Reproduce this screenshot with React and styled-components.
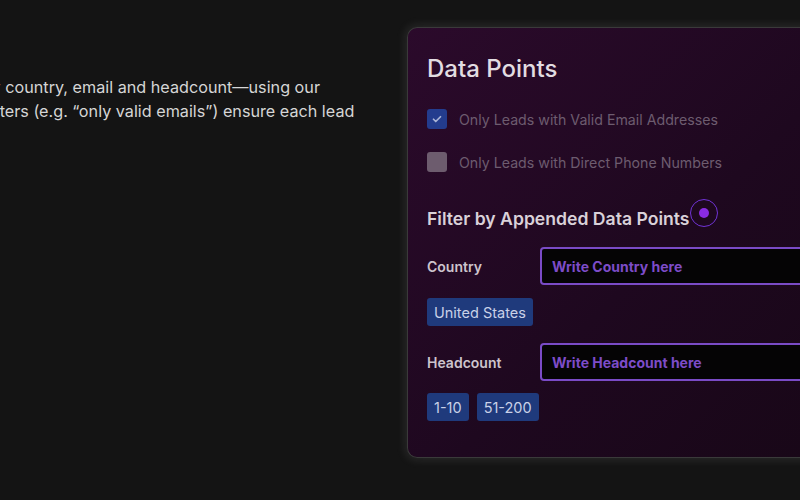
import React from 'react';
import styled, { createGlobalStyle } from 'styled-components';

const GlobalStyle = createGlobalStyle`
	html, body {
		margin: 0;
		padding: 0;
		background: #141414;
		overflow: hidden;
	}
	body {
		font-family: Inter, "Liberation Sans", sans-serif;
	}
`;

const Page = styled.div`
	width: 800px;
	height: 500px;
	display: grid;
	grid-template-columns: 407px 440px;
	align-items: start;
	overflow: hidden;
`;

const Intro = styled.div`
	padding-top: 75px;
	overflow: hidden;
`;

const IntroText = styled.p`
	margin: 0 0 0 -18px;
	font-size: 16.2px;
	line-height: 24px;
	color: #d6d6d6;
	white-space: nowrap;
`;

const Card = styled.section`
	margin-top: 27px;
	height: 431px;
	box-sizing: border-box;
	padding: 26px 20px 0 19px;
	border: 1px solid #3a3a3a;
	border-right: none;
	border-radius: 10px 0 0 10px;
	background: linear-gradient(135deg, #2b0a2b 0%, #1e081f 55%, #180717 100%);
	box-shadow: 0 0 10px 2px rgba(200, 200, 200, 0.12);
	display: flex;
	flex-direction: column;
`;

const Title = styled.h2`
	margin: 0;
	font-size: 24px;
	font-weight: 500;
	line-height: 30px;
	color: #e2dde2;
`;

const CheckList = styled.div`
	margin-top: 25px;
	display: flex;
	flex-direction: column;
	gap: 23px;
`;

const CheckRow = styled.label`
	display: flex;
	align-items: center;
	gap: 12px;
	font-size: 14.2px;
	color: #6d5c6f;
`;

const Box = styled.span`
	width: 20px;
	height: 20px;
	border-radius: 3px;
	display: flex;
	align-items: center;
	justify-content: center;
	background: ${p => (p.$checked ? '#233c8e' : '#6d5c6e')};
`;

const SectionHead = styled.div`
	margin-top: 35px;
	position: relative;
	align-self: flex-start;
	font-size: 17.6px;
	font-weight: 600;
	line-height: 24px;
	color: #d9d1d9;
`;

const Cursor = styled.span`
	position: absolute;
	left: 100%;
	top: -8px;
	width: 28px;
	height: 28px;
	box-sizing: border-box;
	border: 1.5px solid #7033d6;
	border-radius: 50%;
	display: flex;
	align-items: center;
	justify-content: center;
	&::after {
		content: '';
		width: 10px;
		height: 10px;
		border-radius: 50%;
		background: #8a2be2;
	}
`;

const Field = styled.div`
	display: grid;
	grid-template-columns: 113px 1fr;
	align-items: center;
	margin-top: ${p => p.$top}px;
`;

const FieldLabel = styled.span`
	font-size: 14px;
	font-weight: 600;
	color: #cdc4cd;
`;

const Input = styled.input`
	height: 38px;
	box-sizing: border-box;
	padding: 0 10px;
	border: 2px solid #7a4bc6;
	border-radius: 4px;
	background: #050405;
	font-family: Inter, "Liberation Sans", sans-serif;
	font-size: 14px;
	font-weight: 700;
	color: #7d4cc8;
	outline: none;
	&::placeholder {
		color: #7d4cc8;
		opacity: 1;
	}
`;

const Tags = styled.div`
	display: flex;
	gap: 8px;
	margin-top: ${p => p.$top}px;
`;

const Tag = styled.span`
	height: 28px;
	padding: 0 7px;
	display: flex;
	align-items: center;
	border-radius: 3px;
	background: #1f3a7c;
	font-size: 14.5px;
	color: #c9d1e8;
`;

function App () {
	return (
		<>
			<GlobalStyle />
			<Page>
				<Intro>
					<IntroText>
						by country, email and headcount—using our
						<br />
						Filters (e.g. “only valid emails”) ensure each lead
					</IntroText>
				</Intro>
				<Card>
					<Title>Data Points</Title>
					<CheckList>
						<CheckRow>
							<Box $checked>
								<svg width="12" height="12" viewBox="0 0 24 24" fill="none" stroke="#a9b3d6" strokeWidth="3.5" strokeLinecap="round" strokeLinejoin="round">
									<path d="M5 12.5l4.5 4.5L19 7.5" />
								</svg>
							</Box>
							Only Leads with Valid Email Addresses
						</CheckRow>
						<CheckRow>
							<Box />
							Only Leads with Direct Phone Numbers
						</CheckRow>
					</CheckList>
					<SectionHead>
						Filter by Appended Data Points
						<Cursor />
					</SectionHead>
					<Field $top={16}>
						<FieldLabel>Country</FieldLabel>
						<Input placeholder="Write Country here" />
					</Field>
					<Tags $top={13}>
						<Tag>United States</Tag>
					</Tags>
					<Field $top={17}>
						<FieldLabel>Headcount</FieldLabel>
						<Input placeholder="Write Headcount here" />
					</Field>
					<Tags $top={12}>
						<Tag>1-10</Tag>
						<Tag>51-200</Tag>
					</Tags>
				</Card>
			</Page>
		</>
	);
}

export default App;
